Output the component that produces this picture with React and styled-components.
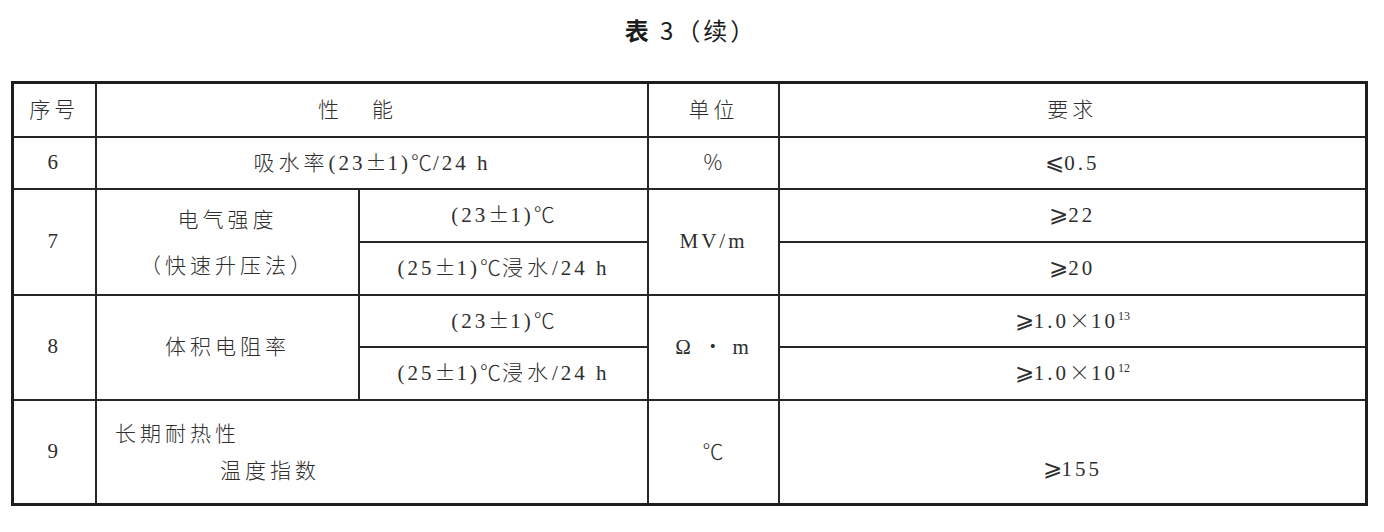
import React from 'react';
import styled, { createGlobalStyle } from 'styled-components';

const GlobalStyle = createGlobalStyle`
  html, body {
    margin: 0;
    padding: 0;
    background: #ffffff;
  }
  body {
    font-family: "Liberation Serif", "Noto Sans CJK SC", serif;
    color: #222;
  }
`;

const Page = styled.div`
  width: 1384px;
  height: 532px;
  box-sizing: border-box;
  padding: 10px 18px 0 12px;
  display: flex;
  flex-direction: column;
  align-items: center;
`;

const Caption = styled.h2`
  margin: 0;
  height: 71px;
  box-sizing: border-box;
  padding-top: 2px;
  padding-left: 4px;
  font-family: "Noto Sans CJK SC", sans-serif;
  font-size: 24px;
  font-weight: 400;
  letter-spacing: 3px;
  color: #1b1b1b;
`;

const Bold = styled.span`
  font-weight: 700;
`;

const Table = styled.table`
  width: 1354px;
  border-collapse: collapse;
  table-layout: fixed;
  border: 3px solid #1e1e1e;
`;

const Col = styled.col`
  width: ${p => p.w}px;
`;

const Row = styled.tr`
  height: ${p => p.h}px;
`;

const Cell = styled.td`
  border: 2px solid #262626;
  padding: 0;
  text-align: ${p => p.align || 'center'};
  vertical-align: ${p => p.valign || 'middle'};
  font-size: 21px;
  letter-spacing: 3px;
  line-height: 1.2;
  color: #2e2e2e;
  box-sizing: border-box;
  white-space: nowrap;
`;

const Han = styled.span`
  font-family: "Noto Sans CJK SC", sans-serif;
  font-weight: 300;
  font-size: 21px;
  letter-spacing: ${p => p.spaced ? '33px' : '4px'};
`;

const Sym = styled.span`
  font-family: "Noto Sans CJK SC", sans-serif;
  font-weight: 300;
  letter-spacing: 1px;
`;

const Ge = styled.span`
  font-family: "DejaVu Sans", "Noto Sans CJK SC", sans-serif;
  font-weight: 300;
  font-size: 23px;
  letter-spacing: 0;
`;

const Sup = styled.sup`
  font-size: 12px;
  letter-spacing: 0;
  vertical-align: 8px;
  line-height: 0;
`;

const Lines = styled.div`
  display: flex;
  flex-direction: column;
  gap: ${p => p.gap}px;
  padding: ${p => p.pad};
`;

const Indent = styled.div`
  padding-left: ${p => p.by}px;
`;

const Bottom = styled.div`
  padding-bottom: 20px;
`;

const Temp = ({ n }) => (
  <>(<span>{n}</span><Sym>±</Sym>1)<Sym>℃</Sym></>
);

export default function App() {
  return (
    <>
      <GlobalStyle />
      <Page>
        <Caption><Bold>表</Bold> 3（续）</Caption>
        <Table>
          <colgroup>
            <Col w={84} />
            <Col w={263} />
            <Col w={289} />
            <Col w={131} />
            <Col w={587} />
          </colgroup>
          <tbody>
            <Row h={54}>
              <Cell><Han>序号</Han></Cell>
              <Cell colSpan={2}><Han spaced>性能</Han></Cell>
              <Cell><Han>单位</Han></Cell>
              <Cell><Han>要求</Han></Cell>
            </Row>
            <Row h={52}>
              <Cell>6</Cell>
              <Cell colSpan={2}>
                <Han>吸水率</Han>(23<Sym>±</Sym>1)<Sym>℃</Sym>/24 h
              </Cell>
              <Cell><Sym>%</Sym></Cell>
              <Cell><Ge>⩽</Ge>0.5</Cell>
            </Row>
            <Row h={53}>
              <Cell rowSpan={2}>7</Cell>
              <Cell rowSpan={2}>
                <Lines gap={20} pad="0">
                  <Han>电气强度</Han>
                  <Han>（快速升压法）</Han>
                </Lines>
              </Cell>
              <Cell><Temp n="23" /></Cell>
              <Cell rowSpan={2}>MV/m</Cell>
              <Cell><Ge>⩾</Ge>22</Cell>
            </Row>
            <Row h={53}>
              <Cell><Temp n="25" /><Han>浸水</Han>/24 h</Cell>
              <Cell><Ge>⩾</Ge>20</Cell>
            </Row>
            <Row h={52}>
              <Cell rowSpan={2}>8</Cell>
              <Cell rowSpan={2}><Han>体积电阻率</Han></Cell>
              <Cell><Temp n="23" /></Cell>
              <Cell rowSpan={2}>Ω <Sym>·</Sym> m</Cell>
              <Cell><Ge>⩾</Ge>1.0<Sym>×</Sym>10<Sup>13</Sup></Cell>
            </Row>
            <Row h={53}>
              <Cell><Temp n="25" /><Han>浸水</Han>/24 h</Cell>
              <Cell><Ge>⩾</Ge>1.0<Sym>×</Sym>10<Sup>12</Sup></Cell>
            </Row>
            <Row h={105}>
              <Cell>9</Cell>
              <Cell colSpan={2} align="left">
                <Lines gap={12} pad="0 0 0 18px">
                  <Han>长期耐热性</Han>
                  <Indent by={105}><Han>温度指数</Han></Indent>
                </Lines>
              </Cell>
              <Cell><Sym>℃</Sym></Cell>
              <Cell valign="bottom">
                <Bottom><Ge>⩾</Ge>155</Bottom>
              </Cell>
            </Row>
          </tbody>
        </Table>
      </Page>
    </>
  );
}
